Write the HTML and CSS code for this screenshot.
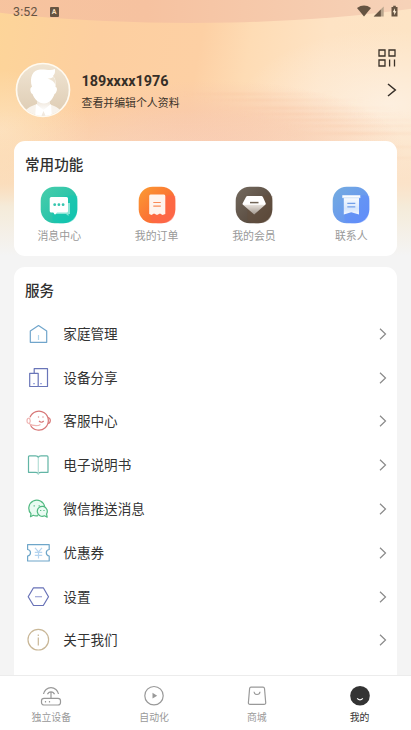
FILE: index.html
```html
<!DOCTYPE html>
<html lang="zh-CN">
<head>
<meta charset="utf-8">
<title>我的</title>
<link rel="stylesheet" href="styles.css">
</head>
<body>
<div class="screen">
  <svg class="backdrop" viewBox="0 0 411 267" preserveAspectRatio="none" aria-hidden="true">
    <defs>
      <linearGradient id="sky" x1="0" x2="1" y1="0" y2="0.12">
        <stop offset="0" stop-color="#fdd599"/><stop offset=".25" stop-color="#fdcfa0"/><stop offset=".5" stop-color="#fdd0a4"/>
        <stop offset=".62" stop-color="#fedcb5"/><stop offset=".8" stop-color="#fee3c4"/><stop offset="1" stop-color="#fde4c5"/>
      </linearGradient>
      <linearGradient id="cap" x1="0" x2="1" y1="0" y2="0">
        <stop offset="0" stop-color="#f8c69c"/><stop offset=".45" stop-color="#f6c2a0"/><stop offset=".75" stop-color="#f6d2b8"/><stop offset="1" stop-color="#fad9b4"/>
      </linearGradient>
      <radialGradient id="rose"><stop offset="0" stop-color="#f8c4aa"/><stop offset=".5" stop-color="#f8c8ac" stop-opacity=".75"/><stop offset="1" stop-color="#f8c8ac" stop-opacity="0"/></radialGradient>
      <radialGradient id="pale"><stop offset="0" stop-color="#fdefdf"/><stop offset="1" stop-color="#fdefdf" stop-opacity="0"/></radialGradient>
      <linearGradient id="fade" x1="0" x2="0" y1="0" y2="1">
        <stop offset="0" stop-color="#fbe2cc" stop-opacity="0"/><stop offset=".5" stop-color="#fae2cb" stop-opacity=".65"/>
        <stop offset=".66" stop-color="#f5ebd9"/><stop offset="1" stop-color="#f4f4f4"/>
      </linearGradient>
      <linearGradient id="streak" x1="0" x2="1" y1="0" y2="0"><stop offset="0" stop-color="#f7bd97" stop-opacity="0"/><stop offset=".35" stop-color="#f8c39f" stop-opacity=".4"/><stop offset="1" stop-color="#f9cdaf" stop-opacity="0"/></linearGradient>
      <filter id="soften" x="-5%" y="-10%" width="110%" height="120%"><feGaussianBlur stdDeviation="3 1"/></filter>
    </defs>
    <rect width="411" height="267" fill="url(#sky)"/>
    <ellipse cx="390" cy="105" rx="150" ry="75" fill="url(#pale)"/>
    <ellipse cx="215" cy="152" rx="190" ry="72" fill="url(#rose)"/>
    <ellipse cx="0" cy="130" rx="90" ry="60" fill="url(#pale)" opacity=".45"/>
    <g fill="url(#streak)" filter="url(#soften)">
      <rect x="180" y="93" width="160" height="2"/><rect x="200" y="99" width="170" height="2"/><rect x="220" y="107" width="180" height="2"/>
      <rect x="240" y="113" width="170" height="2"/><rect x="260" y="119" width="170" height="2"/><rect x="280" y="125" width="170" height="2"/><rect x="290" y="132" width="180" height="3"/>
      <rect x="340" y="146" width="120" height="2"/><rect x="340" y="157" width="120" height="2"/>
    </g>
    <ellipse cx="190" cy="-77" rx="430" ry="100" fill="url(#cap)"/>
    <rect y="110" width="411" height="146" fill="url(#fade)"/>
    <rect y="255" width="411" height="12" fill="#f4f4f4"/>
  </svg>

  <header class="status">
    <span class="clock">3:52</span>
    <span class="ime">A</span>
    <svg class="signals" width="42" height="14" viewBox="0 0 42 14">
      <path d="M0 3Q7 -1.8 14 3L7 11.5Z" fill="#665442"/>
      <path d="M26.7 1.5V11.5H16.7Z" fill="#b8a48c"/><path d="M23.8 4.4V11.5H16.7Z" fill="#665442"/>
      <path d="M36.2 .8H38.8V2H40.5V11.5H34.5V2H36.2Z" fill="#665442"/><path d="M38 3.3L35.7 7.3H37.2V10.2L39.4 6.2H38Z" fill="#fff0d7"/>
    </svg>
  </header>

  <div class="toolbar">
    <svg width="18" height="18" viewBox="0 0 18 18" fill="none" stroke="#3b3228" stroke-width="1.3">
      <path d="M1 1H7V7H1ZM11 1H17V7H11ZM1 11H7V17H1ZM11.6 10.5V17.4M16.5 10.5V17.4"/>
    </svg>
  </div>

  <section class="profile">
    <svg class="avatar" width="56" height="56" viewBox="0 0 56 56">
      <defs>
        <clipPath id="disc"><circle cx="28" cy="28" r="26"/></clipPath>
        <linearGradient id="disc-fill" x1="0" x2="0" y1="0" y2="1"><stop offset="0" stop-color="#f0e5d3"/><stop offset="1" stop-color="#ddcbb2"/></linearGradient>
        <linearGradient id="neck" x1="0" x2="0" y1="0" y2="1"><stop offset="0" stop-color="#e8dccb"/><stop offset="1" stop-color="#fff"/></linearGradient>
      </defs>
      <circle cx="28" cy="28" r="26.5" fill="url(#disc-fill)" stroke="#fffaf0" stroke-width="1.7"/>
      <g clip-path="url(#disc)">
        <path d="M8 56C9 47 14 45 22 42H34C42 45 47 47 49 56Z" fill="#f8f3ec"/>
        <path d="M22 35H35V43L28.5 49L22 43Z" fill="url(#neck)"/>
        <path d="M21 42L28.5 48L36 42L37 56H20Z" fill="#fff"/>
        <path d="M25.5 56L28.5 49L31.5 56Z" fill="#f1e9df"/>
        <path d="M17 25C14 15 18 8 25 7.500C31 7 35 9 40 7C40.500 11 39 13 38 14C41 17 41 21 40.500 25C43 25 42 31 39.500 32C38 37 34 41.500 29 41.500C24 41.500 19 37 17.500 32C15 31 14.500 25 17 25Z" fill="#fff"/>
        <path d="M31 16Q36 18 40 13L38.500 15Q41 18 40.500 23Q39 18 31 16Z" fill="#eee3d2"/>
      </g>
    </svg>
    <div class="identity">
      <div class="phone">189xxxx1976</div>
      <div class="hint">查看并编辑个人资料</div>
    </div>
    <svg class="go" width="10" height="14" viewBox="0 0 10 14" fill="none" stroke="#352e27" stroke-width="1.5"><path d="M1 1L8.300 7L1 13"/></svg>
  </section>

  <section class="card common">
    <h2>常用功能</h2>
    <div class="shortcuts">
      <div class="shortcut">
        <svg width="38" height="38" viewBox="0 0 38 38">
          <defs><linearGradient id="teal" x2="1" y2="1"><stop stop-color="#48ceab"/><stop offset="1" stop-color="#17bda9"/></linearGradient></defs>
          <rect x=".7" y=".7" width="36.600" height="36.600" rx="14" fill="url(#teal)"/>
          <path d="M37.300 10Q28 8 20 12Q10 20 13 35Q16 37.300 23 37.300Q37.300 37.300 37.300 23Z" fill="#08c9b5" opacity=".45"/>
          <path d="M13 17H30V28H28.500V30L26 28H14Z" fill="#8ae5d6"/>
          <path d="M11.300 11H26.500Q28 11 28 12.500V25Q28 26.500 26.500 26.500H17L15 28.800L13.300 26.500H11.300Q9.700 26.500 9.700 25V12.500Q9.700 11 11.300 11Z" fill="#fff"/>
          <g fill="#35c5ae"><circle cx="14.700" cy="18.700" r="1.400"/><circle cx="18.900" cy="18.700" r="1.400"/><circle cx="23.100" cy="18.700" r="1.400"/></g>
        </svg>
        <span>消息中心</span>
      </div>
      <div class="shortcut">
        <svg width="38" height="38" viewBox="0 0 38 38">
          <defs><linearGradient id="orange" x2="1" y2="1"><stop stop-color="#fb9c32"/><stop offset=".55" stop-color="#fb7434"/><stop offset="1" stop-color="#fb6b42"/></linearGradient></defs>
          <rect x=".7" y=".7" width="36.600" height="36.600" rx="14" fill="url(#orange)"/>
          <path d="M37.300 10Q28 8 20 12Q10 20 13 35Q16 37.300 23 37.300Q37.300 37.300 37.300 23Z" fill="#ff6050" opacity=".5"/>
          <path d="M12.500 8.500H26Q27.300 8.500 27.300 10V28L24.500 29L22 27.500L19 29L16 27.500L13.500 29L11.200 28V10Q11.200 8.500 12.500 8.500Z" fill="#fff4ee"/>
          <path d="M15.300 16.500H22.800M15.300 20.200H22.800" stroke="#fa8a57" stroke-width="1.200"/>
        </svg>
        <span>我的订单</span>
      </div>
      <div class="shortcut">
        <svg width="38" height="38" viewBox="0 0 38 38">
          <defs><linearGradient id="brown" x2="1" y2="1"><stop stop-color="#746a5f"/><stop offset="1" stop-color="#4e3f33"/></linearGradient>
          <linearGradient id="gem" x1="0" x2="0" y1="0" y2="1"><stop offset=".45" stop-color="#fff"/><stop offset=".5" stop-color="#e4ded8"/><stop offset="1" stop-color="#a1978e"/></linearGradient></defs>
          <rect x=".7" y=".7" width="36.600" height="36.600" rx="14" fill="url(#brown)"/>
          <path d="M37.300 10Q28 8 20 12Q10 20 13 35Q16 37.300 23 37.300Q37.300 37.300 37.300 23Z" fill="#66503d" opacity=".5"/>
          <path d="M12.500 10H26.500Q27.300 10 28 11.300L30.700 17.300Q31 18.200 30 19L19.200 28.500L8.200 19Q7.200 18.200 7.700 17.300L11 11Q11.500 10 12.500 10Z" fill="url(#gem)"/>
          <path d="M15 16.600H23.500" stroke="#706456" stroke-width="1.500"/>
        </svg>
        <span>我的会员</span>
      </div>
      <div class="shortcut">
        <svg width="38" height="38" viewBox="0 0 38 38">
          <defs><linearGradient id="blue" x2="1" y2="1"><stop stop-color="#74acdf"/><stop offset="1" stop-color="#638ef8"/></linearGradient>
          <linearGradient id="sheet" x1="0" x2="0" y1="0" y2="1"><stop stop-color="#fff"/><stop offset=".7" stop-color="#d8e7fc"/><stop offset="1" stop-color="#f4f8ff"/></linearGradient></defs>
          <rect x=".7" y=".7" width="36.600" height="36.600" rx="14" fill="url(#blue)"/>
          <path d="M37.300 10Q28 8 20 12Q10 20 13 35Q16 37.300 23 37.300Q37.300 37.300 37.300 23Z" fill="#5d89ff" opacity=".4"/>
          <path d="M10.300 9.300H28.300V12H27V28.500L19.200 26.300L11.800 28.500V12H10.300Z" fill="url(#sheet)"/>
          <path d="M10.300 11.800H28.300" stroke="#b7d0f4" stroke-width=".6"/>
          <path d="M15.300 17.300H23.300M15.300 20.900H23.300" stroke="#729fe9" stroke-width="1.200"/>
        </svg>
        <span>联系人</span>
      </div>
    </div>
  </section>

  <section class="card services">
    <h2>服务</h2>
    <ul>
      <li>
        <svg class="icon" viewBox="0 0 24 24" stroke="#70a5cb"><path d="M4.300 9L12.500 3.600L20.700 9V20.300H4.300Z"/><path d="M12.500 13V18" stroke="#b1d5ec"/></svg>
        <span>家庭管理</span><svg class="chevron" viewBox="0 0 8 12"><path d="M1 .8L6.500 6L1 11.200"/></svg>
      </li>
      <li>
        <svg class="icon" viewBox="0 0 24 24" stroke="#6975b8"><path d="M8.200 7V2.700H21.500V20.500H12.300"/><path d="M3.700 7.300H12.200V20.500H3.700Z"/><path d="M7 17.700H9M14 17.700H16" stroke="#a2ace0"/></svg>
        <span>设备分享</span><svg class="chevron" viewBox="0 0 8 12"><path d="M1 .8L6.500 6L1 11.200"/></svg>
      </li>
      <li>
        <svg class="icon" viewBox="0 0 24 24" stroke="#d77676"><path d="M4 8.200A9.500 9.500 0 1 1 4.500 16.200"/><path d="M22 8.500Q24.300 9 24.300 11.500T22 14.500M12.500 7.500V8.500M17 7.500V8.500M13 12Q15.500 14.500 17.700 12"/><path d="M3.500 9Q1 9 1 11.800T3.500 14.500Q5 12 3.500 9M3.500 15Q6 17 12.500 16.500L14.500 15.500" stroke="#efb4b2"/></svg>
        <span>客服中心</span><svg class="chevron" viewBox="0 0 8 12"><path d="M1 .8L6.500 6L1 11.200"/></svg>
      </li>
      <li>
        <svg class="icon" viewBox="0 0 24 24" stroke="#62b5a5"><path d="M12.300 4.500Q11.800 2.800 9.500 2.800H3.500Q2.500 2.800 2.500 4V19.300H9.500Q11.500 19.300 12.300 20.500Q13 19.300 15 19.300H22V4Q22 2.800 21 2.800H15Q12.700 2.800 12.300 4.500"/><path d="M12.300 5V22" stroke="#b5dfd6"/></svg>
        <span>电子说明书</span><svg class="chevron" viewBox="0 0 8 12"><path d="M1 .8L6.500 6L1 11.200"/></svg>
      </li>
      <li>
        <svg class="icon" viewBox="0 0 24 24" stroke="#50b980"><path d="M12 18.700Q9.500 19.400 7.300 18.300L4.500 19.700L5 16.700A8 8 0 1 1 18.700 9.800" fill="#e9fbf1"/><path d="M18.500 18.800A5 5 0 1 1 20.500 17L21.200 20.200Z" fill="#eafbf2"/><path d="M8.200 8.300V9.500M13.200 8.300V9.500M14.700 13V14M18 13V14"/></svg>
        <span>微信推送消息</span><svg class="chevron" viewBox="0 0 8 12"><path d="M1 .8L6.500 6L1 11.200"/></svg>
      </li>
      <li>
        <svg class="icon" viewBox="0 0 24 24" stroke="#6ea6c9"><path d="M1.600 3.600H23.200V8.500Q20.300 9 20.300 11.700T23.200 15V20H1.600V15Q4.500 14.400 4.500 11.700T1.600 8.500Z"/><path d="M9 6.800L12.500 10.800L16 6.800M12.500 10.800V17.500M8.800 11.300H16.200M8.800 14.300H16.200" stroke="#b5d4ef"/></svg>
        <span>优惠券</span><svg class="chevron" viewBox="0 0 8 12"><path d="M1 .8L6.500 6L1 11.200"/></svg>
      </li>
      <li>
        <svg class="icon" viewBox="0 0 24 24" stroke="#6872b7"><path d="M7.500 2.800H17.300L22.500 11.700L17.300 20.500H7.500L2.200 11.700Z"/><path d="M9 11.700H16" stroke="#a0a7d8"/></svg>
        <span>设置</span><svg class="chevron" viewBox="0 0 8 12"><path d="M1 .8L6.500 6L1 11.200"/></svg>
      </li>
      <li>
        <svg class="icon" viewBox="0 0 24 24" stroke="#c9b797"><circle cx="12.300" cy="11.700" r="10.300"/><path d="M12.300 6.500V8M12.300 9.500V17.500"/></svg>
        <span>关于我们</span><svg class="chevron" viewBox="0 0 8 12"><path d="M1 .8L6.500 6L1 11.200"/></svg>
      </li>
    </ul>
  </section>

  <nav class="tabs">
    <div class="tab">
      <svg viewBox="0 0 22 22"><rect x="1.500" y="13.300" width="19" height="6.700" rx="2.500"/><path d="M11 13V7.500M7.500 9.300A3.700 3.700 0 0 1 14.500 9.300M3.500 9A7.600 7.600 0 0 1 18.500 9M5.500 16V17.500M9.500 16V17.500"/></svg>
      <span>独立设备</span>
    </div>
    <div class="tab">
      <svg viewBox="0 0 22 22"><circle cx="11" cy="10.700" r="9.200"/><path d="M9.500 7.800V13.500L14.200 10.700Z" fill="#999" stroke="none"/></svg>
      <span>自动化</span>
    </div>
    <div class="tab">
      <svg viewBox="0 0 22 22"><path d="M5 2.200H17Q18.300 2.200 18.500 3.500L19.700 17.500Q19.800 19.300 18 19.300H4Q2.300 19.300 2.400 17.500L3.600 3.500Q3.800 2.200 5 2.200ZM8 6.800Q8.300 9.500 11 9.500T14 6.800"/></svg>
      <span>商城</span>
    </div>
    <div class="tab active">
      <svg viewBox="0 0 22 22"><circle cx="11" cy="10.700" r="9.800" fill="#333" stroke="none"/><path d="M8.200 13.300Q11 16.500 13.800 13.300" stroke="#fff"/></svg>
      <span>我的</span>
    </div>
  </nav>
</div>
</body>
</html>
```
FILE: styles.css
```css
* {
  box-sizing: border-box;
}

body {
  margin: 0;
  background: #f4f4f4;
  font-family: Roboto, "Noto Sans CJK SC", sans-serif;
  color: #333;
}

.screen {
  position: relative;
  width: 411px;
  height: 730px;
  display: flex;
  flex-direction: column;
  overflow: hidden;
}

.backdrop {
  position: absolute;
  top: 0;
  left: 0;
  width: 411px;
  height: 267px;
  z-index: -1;
}

.status {
  height: 24px;
  flex: none;
  display: flex;
  align-items: center;
  padding: 0 12.5px 0 13px;
  color: #665442;
}

.clock {
  font-size: 12.4px;
  line-height: 24px;
  letter-spacing: 0.2px;
}

.ime {
  width: 9px;
  height: 10px;
  margin-left: 12px;
  border-radius: 1px;
  background: #665442;
  color: #fbe0c0;
  font-size: 7px;
  font-weight: 700;
  line-height: 10px;
  text-align: center;
}

.signals {
  margin-left: auto;
}

.toolbar {
  flex: none;
  height: 39px;
  padding: 24.5px 15.5px 0 0;
  display: flex;
  justify-content: flex-end;
}

.toolbar svg {
  flex: none;
}

.profile {
  flex: none;
  height: 78.3px;
  padding: 0 14px 0 15px;
  display: flex;
  align-items: flex-start;
}

.avatar {
  flex: none;
  margin-top: -0.8px;
}

.identity {
  margin: 9px 0 0 10.5px;
}

.phone {
  font-size: 14.4px;
  font-weight: 700;
  line-height: 19px;
  color: #352e27;
}

.hint {
  margin-top: 5px;
  font-size: 10.9px;
  line-height: 16px;
  color: #3d342b;
}

.go {
  margin: 20.3px 0 0 auto;
}

.card {
  flex: none;
  margin: 0 14px;
  padding: 0 11px;
  border-radius: 11px;
  background: #fff;
}

h2 {
  margin: 0;
  font-size: 14.6px;
  font-weight: 500;
  line-height: 22px;
  color: #303030;
}

.common {
  height: 115px;
  padding-top: 13px;
}

.shortcuts {
  display: flex;
  justify-content: space-between;
  padding: 0 13px 0 12.5px;
  margin-top: 9.5px;
}

.shortcut {
  width: 43.5px;
  display: flex;
  flex-direction: column;
  align-items: center;
  font-size: 10.9px;
  line-height: 16px;
  color: #999;
  white-space: nowrap;
}

.shortcut span {
  margin-top: 5px;
}

.services {
  flex: 1;
  min-height: 0;
  margin-top: 10.7px;
  padding-top: 13px;
  border-radius: 11px 11px 0 0;
}

.services ul {
  margin: 10px 0 0;
  padding: 0;
  list-style: none;
}

.services li {
  height: 43.8px;
  display: flex;
  align-items: center;
  padding: 0 0 0 1px;
  font-size: 13.6px;
  line-height: 20px;
}

.icon {
  width: 24px;
  height: 24px;
  margin-right: 13.3px;
  overflow: visible;
  fill: none;
  stroke-width: 1.2;
  stroke-linejoin: round;
}

.chevron {
  width: 8px;
  height: 12px;
  margin-left: auto;
  margin-right: -1px;
  fill: none;
  stroke: #8a8a8a;
  stroke-width: 1.2;
}

.tabs {
  flex: none;
  height: 55px;
  display: grid;
  grid-template-columns: repeat(4, 1fr);
  border-top: 1px solid #ececec;
  background: #fff;
}

.tab {
  display: flex;
  flex-direction: column;
  align-items: center;
  padding-top: 9px;
  font-size: 9.9px;
  line-height: 14px;
  color: #999;
}

.tab svg {
  width: 22px;
  height: 22px;
  fill: none;
  stroke: #999;
  stroke-width: 1.2;
}

.tab span {
  margin-top: 3.5px;
}

.tab.active {
  color: #333;
}
```
